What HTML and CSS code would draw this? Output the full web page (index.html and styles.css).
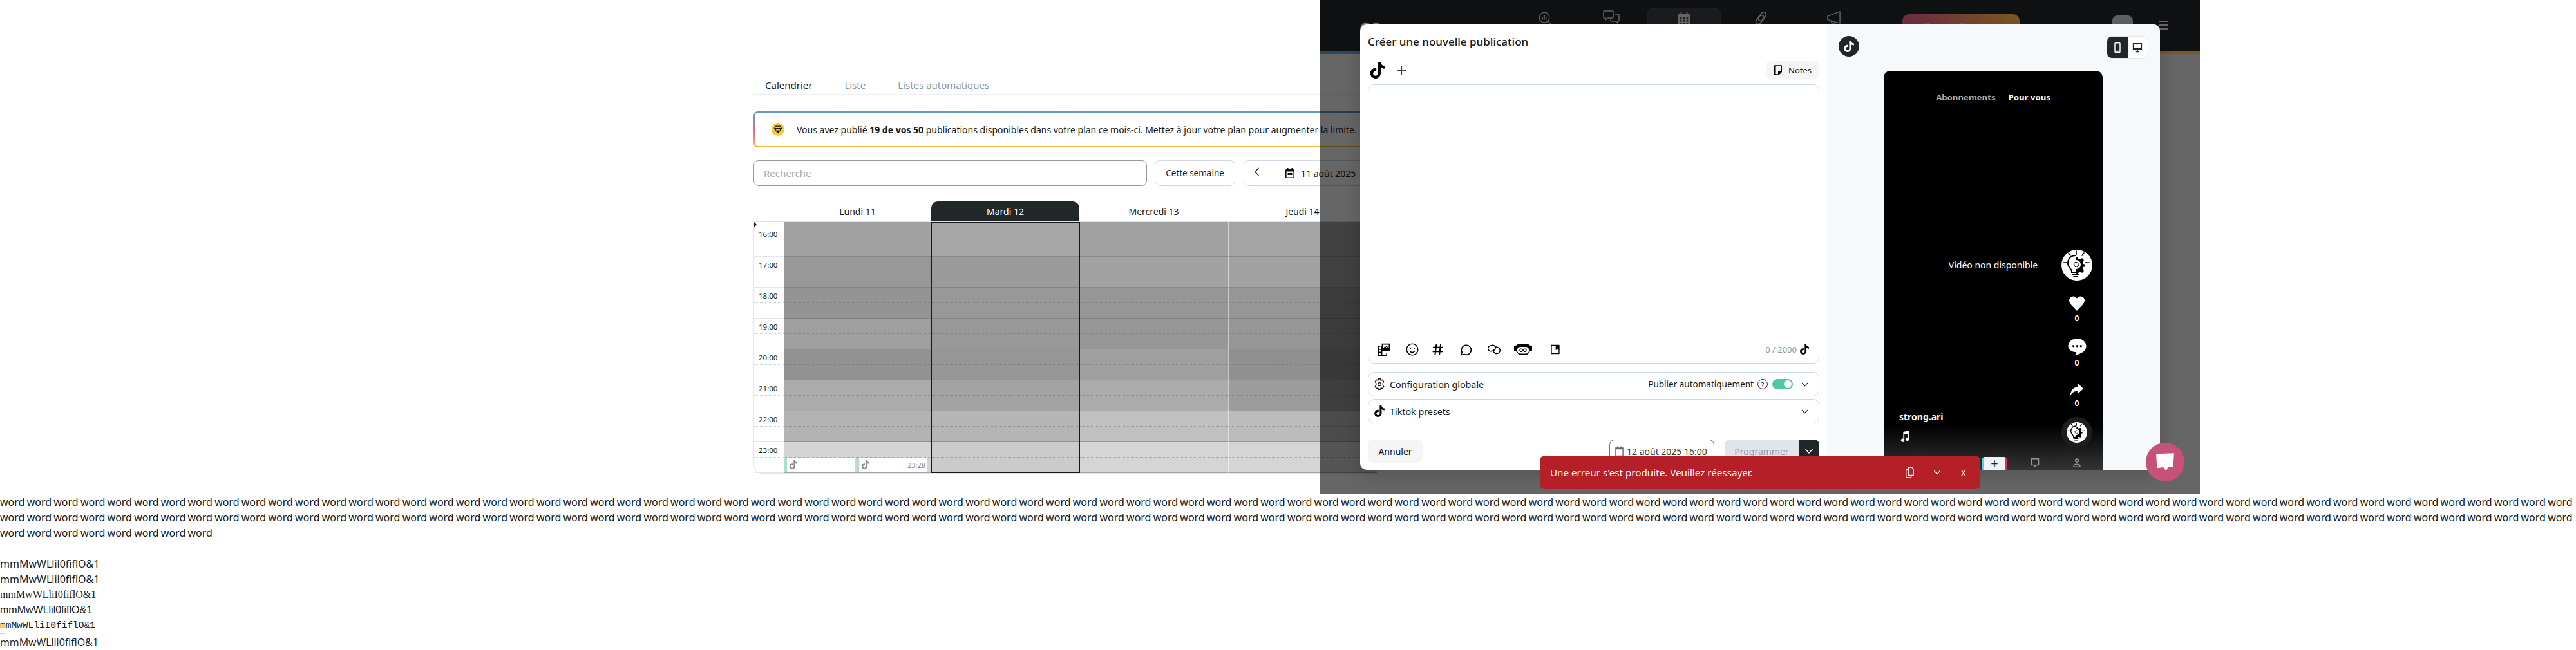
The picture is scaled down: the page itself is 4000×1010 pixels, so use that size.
FILE: index.html
```html
<!DOCTYPE html>
<html lang="fr">
<head>
  <meta charset="UTF-8" />
  <title>Calendrier</title>
  <link rel="stylesheet" href="styles.css">
</head>
<body>
  <svg class="sprite" xmlns="http://www.w3.org/2000/svg">
    <symbol id="tiktok" viewBox="0 0 24 24"><path fill="currentColor" d="M12.525.02c1.31-.02 2.61-.01 3.91-.02.08 1.53.63 3.09 1.75 4.17 1.12 1.11 2.7 1.62 4.24 1.79v4.03c-1.44-.05-2.89-.35-4.2-.97-.57-.26-1.1-.59-1.62-.93-.01 2.92.01 5.84-.02 8.75-.08 1.4-.54 2.79-1.35 3.94-1.31 1.92-3.58 3.17-5.91 3.21-1.43.08-2.86-.31-4.08-1.03-2.02-1.19-3.44-3.37-3.65-5.71-.02-.5-.03-1-.01-1.49.18-1.9 1.12-3.72 2.58-4.96 1.66-1.44 3.98-2.13 6.15-1.72.02 1.48-.04 2.96-.04 4.44-.99-.32-2.15-.23-3.02.37-.63.41-1.11 1.04-1.36 1.75-.21.51-.15 1.07-.14 1.61.24 1.64 1.82 3.02 3.5 2.87 1.12-.01 2.19-.66 2.77-1.61.19-.33.4-.67.41-1.06.1-1.79.06-3.57.07-5.36.01-4.03-.01-8.05.02-12.07z"/></symbol>
    <symbol id="chevron" viewBox="0 0 16 16"><path fill="none" stroke="currentColor" stroke-width="1.5" stroke-linecap="round" stroke-linejoin="round" d="M3 5.5 8 11l5-5.5"/></symbol>
    <symbol id="bulb" viewBox="0 0 48 48">
      <circle cx="24" cy="24" r="24" fill="#fff"/>
      <g fill="none" stroke="#000" stroke-linecap="round">
        <path stroke-width="1.6" d="M23 2v6M11 5l3 4M35 5l-3 4M3 20h6M37 20h6"/>
        <path stroke-width="2" d="M22 9c-7 0-12 5-12 12 0 5 3 7 5 10 1 1 1 3 1 4h10"/>
        <path stroke-width="1.8" d="M17 38h10M19 42h6"/>
      </g>
      <path fill="#000" d="M23 11h2l1 3 3 1 3-2 3 3-2 3 1 3 3 1v3l-3 1-1 3 2 3-3 3-3-2-3 1-1 3h-3z"/>
      <circle cx="23" cy="23" r="7" fill="#fff"/>
      <circle cx="23" cy="23" r="3.5" fill="none" stroke="#000" stroke-width="1.5" stroke-dasharray="2 .6"/>
    </symbol>
  </svg>

  <main class="page">
    <div class="planner">
      <nav class="tabs">
        <a class="tab tab-active">Calendrier</a>
        <a class="tab">Liste</a>
        <a class="tab">Listes automatiques</a>
      </nav>

      <div class="banner">
        <span class="gem">
          <svg viewBox="0 0 20 20" width="14" height="14"><path fill="none" stroke="#111" stroke-width="1.6" stroke-linejoin="round" d="M5.5 3h9L18 8l-8 10L2 8zM2 8h16M7 8l3 10 3-10"/></svg>
        </span>
        <p class="banner-text">Vous avez publié <b>19 de vos 50</b> publications disponibles dans votre plan ce mois-ci. Mettez à jour votre plan pour augmenter la limite.</p>
      </div>

      <div class="toolbar">
        <input class="search" type="text" placeholder="Recherche">
        <button class="btn-week">Cette semaine</button>
        <div class="range">
          <button class="range-prev">
            <svg viewBox="0 0 10 16" width="9" height="14"><path fill="none" stroke="#222" stroke-width="1.5" stroke-linecap="round" stroke-linejoin="round" d="M8 1.500 2 8l6 6.500"/></svg>
          </button>
          <div class="range-label">
            <svg viewBox="0 0 14 16" width="14" height="16"><path fill="#111" d="M3 0h1.600v2h4.800V0H11v2h1.500A1.500 1.500 0 0 1 14 3.500v11a1.500 1.500 0 0 1-1.500 1.500h-11A1.500 1.500 0 0 1 0 14.500v-11A1.500 1.500 0 0 1 1.500 2H3zM1.600 5.500v9h10.800v-9z"/><path fill="#111" d="M3.500 8h7v3h-7z"/></svg>
            <span>11 août 2025 - 17 août 2025</span>
          </div>
        </div>
      </div>

      <div class="days">
        <div class="day">Lundi 11</div>
        <div class="day day-today">Mardi 12</div>
        <div class="day">Mercredi 13</div>
        <div class="day">Jeudi 14</div>
      </div>

      <div class="grid">
        <div class="now"></div>
        <div class="today-frame"></div>

        <div class="time"><span>16:00</span></div>
        <div class="cell s-a2"></div><div class="cell s-a6"></div><div class="cell s-a2 sep"></div><div class="cell s-a4 sep"></div>

        <div class="time"><span>17:00</span></div>
        <div class="cell s-98"></div><div class="cell s-9b"></div><div class="cell s-a2 sep"></div><div class="cell s-a2 sep"></div>

        <div class="time"><span>18:00</span></div>
        <div class="cell s-94"></div><div class="cell s-98"></div><div class="cell s-96 sep"></div><div class="cell s-96 sep"></div>

        <div class="time"><span>19:00</span></div>
        <div class="cell s-9f"></div><div class="cell s-98"></div><div class="cell s-96 sep"></div><div class="cell s-96 sep"></div>

        <div class="time"><span>20:00</span></div>
        <div class="cell s-92"></div><div class="cell s-96"></div><div class="cell s-9f sep"></div><div class="cell s-90 sep"></div>

        <div class="time"><span>21:00</span></div>
        <div class="cell s-ab"></div><div class="cell s-a3"></div><div class="cell s-ab sep"></div><div class="cell s-9c sep"></div>

        <div class="time"><span>22:00</span></div>
        <div class="cell s-b3"></div><div class="cell s-b5"></div><div class="cell s-c0 sep"></div><div class="cell s-bc sep"></div>

        <div class="time"><span>23:00</span></div>
        <div class="cell s-d4 cell-events">
          <div class="event"><svg class="event-icon"><use href="#tiktok"/></svg></div>
          <div class="event"><svg class="event-icon"><use href="#tiktok"/></svg><span class="event-time">23:28</span></div>
        </div>
        <div class="cell s-cb"></div><div class="cell s-d5 sep"></div><div class="cell s-d5 sep"></div>
      </div>
    </div>
  </main>

  <section class="filler">
    <p class="words">
      word word word word word word word word word word
      word word word word word word word word word word
      word word word word word word word word word word
      word word word word word word word word word word
      word word word word word word word word word word
      word word word word word word word word word word
      word word word word word word word word word word
      word word word word word word word word word word
      word word word word word word word word word word
      word word word word word word word word word word
      word word word word word word word word word word
      word word word word word word word word word word
      word word word word word word word word word word
      word word word word word word word word word word
      word word word word word word word word word word
      word word word word word word word word word word
      word word word word word word word word word word
      word word word word word word word word word word
      word word word word word word word word word word
      word word word word word word word word word word
    </p>
    <p class="sample f-noto">mmMwWLlil0fiflO&amp;1</p>
    <p class="sample f-noto">mmMwWLlil0fiflO&amp;1</p>
    <p class="sample f-serif">mmMwWLliI0fiflO&amp;1</p>
    <p class="sample f-sans">mmMwWLlil0fiflO&amp;1</p>
    <p class="sample f-mono">mmMwWLliI0fiflO&amp;1</p>
    <div class="tick"></div>
    <p class="sample f-last">mmMwWLlil0fiflO&amp;1</p>
  </section>

  <div class="scrim">
    <header class="topbar">
      <svg class="bar-logo" viewBox="0 0 36 20"><path fill="none" stroke="#777" stroke-width="4" d="M4 20C0 8 8 2 12 4s6 8 6 8 2-6 6-8 12 4 8 16"/></svg>
      <svg class="bar-icon i-stats" viewBox="0 0 24 24"><g fill="none" stroke="#666" stroke-width="1.500"><circle cx="10" cy="10" r="8.500"/><path d="m16 16 6 7M7 13v-3M10 13V6M13 13V9" stroke-linecap="round"/></g></svg>
      <svg class="bar-icon i-chat" viewBox="0 0 26 22"><g fill="none" stroke="#666" stroke-width="1.500" stroke-linejoin="round"><path d="M2 1h13a1 1 0 0 1 1 1v9a1 1 0 0 1-1 1H7l-3 3v-3H2a1 1 0 0 1-1-1V2a1 1 0 0 1 1-1z"/><path d="M19 6h5a1 1 0 0 1 1 1v9a1 1 0 0 1-1 1h-1v3l-3-3h-6l-3-2"/></g></svg>
      <div class="bar-active">
        <svg class="bar-icon" viewBox="0 0 20 22"><path fill="#666" d="M4 0h2v3h8V0h2v3h2a2 2 0 0 1 2 2v15a2 2 0 0 1-2 2H2a2 2 0 0 1-2-2V5a2 2 0 0 1 2-2h2zM3 8v3h3V8zm5.500 0v3h3V8zm5.500 0v3h3V8zM3 13v3h3v-3zm5.500 0v3h3v-3zm5.500 0v3h3v-3zM3 18v2h3v-2zm5.500 0v2h3v-2zm5.500 0v2h3v-2z"/></svg>
      </div>
      <svg class="bar-icon i-link" viewBox="0 0 26 26"><g fill="none" stroke="#666" stroke-width="2"><rect x="10" y="1" width="9" height="18" rx="4.500" transform="rotate(40 14.500 10)"/><rect x="6" y="7" width="9" height="18" rx="4.500" transform="rotate(40 10.500 16)"/></g></svg>
      <svg class="bar-icon i-mega" viewBox="0 0 24 22"><path fill="none" stroke="#666" stroke-width="1.600" stroke-linejoin="round" d="M1 9 22 1v20L1 15zM7 17c0 5 7 5 7 2"/></svg>
      <div class="bar-premium">Devenir Premium</div>
      <div class="bar-avatar"></div>
      <div class="bar-menu"><i></i><i></i><i></i></div>
    </header>

    <div class="modal">
      <div class="compose">
        <h2 class="compose-title">Créer une nouvelle publication</h2>
        <div class="compose-head">
          <svg class="head-tiktok"><use href="#tiktok"/></svg>
          <svg class="head-plus" viewBox="0 0 16 16"><path fill="none" stroke="#444" stroke-width="1.400" d="M8 1v14M1 8h14"/></svg>
          <button class="btn-notes">
            <svg viewBox="0 0 16 18" width="14" height="18"><path fill="none" stroke="#000" stroke-width="1.800" stroke-linejoin="round" d="M2 1h12v11l-5 5H2z"/><path fill="#000" d="M8 11h6l-6 6z"/></svg>
            Notes
          </button>
        </div>

        <div class="editor">
          <div class="editor-tools">
            <svg class="tool" viewBox="0 0 24 24"><path fill="#000" d="M8 1h15v14H8zm2 2v7l4-4 3 3 2-2 2 2V3z"/><circle cx="17" cy="6" r="1.500" fill="#000"/><path fill="none" stroke="#000" stroke-width="1.800" d="M5 6H2v17h15v-5M2 12h6M2 17h6M8 6v17"/></svg>
            <svg class="tool tool-smile" viewBox="0 0 24 24"><g fill="none" stroke="#000" stroke-width="1.800"><circle cx="12" cy="12" r="10.500"/><path d="M7.500 15c2 3 7 3 9 0" stroke-linecap="round"/></g><circle cx="8.500" cy="9.500" r="1.300"/><circle cx="15.500" cy="9.500" r="1.300"/></svg>
            <svg class="tool tool-hash" viewBox="0 0 24 24"><path fill="none" stroke="#000" stroke-width="2.400" d="M9 2 6.500 22M17 2l-2.500 20M2.500 8h19M2 16h19"/></svg>
            <svg class="tool" viewBox="0 0 24 24"><path fill="none" stroke="#000" stroke-width="2" stroke-linejoin="round" d="M3 22l2-5A9 9 0 1 1 9 21z"/></svg>
            <svg class="tool tool-link" viewBox="0 0 26 24"><g fill="none" stroke="#000" stroke-width="2"><rect x="1" y="4" width="15" height="11" rx="5.500" transform="rotate(-15 8 10)"/><path d="M14 7c6-1 11 2 11 7s-5 7-9 6-6-5-3-9"/></g></svg>
            <svg class="tool tool-bot" viewBox="0 0 34 24"><path fill="#000" d="M8 1h18l3 3 5 1v9l-4 1c-2 6-7 8-13 8s-11-2-13-8l-4-1V5l5-1z"/><rect x="6" y="7" width="22" height="13" rx="6" fill="#fff"/><g fill="none" stroke="#000" stroke-width="1.800"><circle cx="13.500" cy="13.500" r="2.500"/><circle cx="20.500" cy="13.500" r="2.500"/></g></svg>
            <svg class="tool tool-doc" viewBox="0 0 24 24"><path fill="none" stroke="#000" stroke-width="2" stroke-linejoin="round" d="M3 2h18v20H3z"/><path fill="#000" d="M13 2h8v12l-4-3-4 3z"/></svg>
            <span class="counter">0 / 2000</span>
            <svg class="counter-icon"><use href="#tiktok"/></svg>
          </div>
        </div>

        <div class="panel">
          <svg class="panel-icon" viewBox="0 0 24 24"><g fill="none" stroke="#111" stroke-width="1.800" stroke-linejoin="round"><path d="M10 1h4l1 3 3-1 3 4-2 3v4l2 3-3 4-3-1-1 3h-4l-1-3-3 1-3-4 2-3v-4L3 7l3-4 3 1z"/><circle cx="12" cy="12" r="3.200"/></g></svg>
          <span class="panel-title">Configuration globale</span>
          <span class="panel-auto">Publier automatiquement</span>
          <span class="help">?</span>
          <span class="switch"><i></i></span>
          <svg class="panel-chevron"><use href="#chevron"/></svg>
        </div>
        <div class="panel panel-second">
          <svg class="panel-icon"><use href="#tiktok"/></svg>
          <span class="panel-title">Tiktok presets</span>
          <svg class="panel-chevron panel-chevron-end"><use href="#chevron"/></svg>
        </div>

        <div class="actions">
          <button class="btn-cancel">Annuler</button>
          <button class="btn-date">
            <svg viewBox="0 0 14 18" width="13" height="18"><path fill="none" stroke="#666" stroke-width="1.500" d="M1 3.500h12V17H1zM4 1v3M10 1v3"/><path fill="#666" d="M1 3.500h12V6H1z"/></svg>
            12 août 2025 16:00
          </button>
          <div class="schedule">
            <button class="btn-schedule">Programmer</button>
            <button class="btn-more"><svg class="more-icon"><use href="#chevron"/></svg></button>
          </div>
        </div>
      </div>

      <aside class="preview">
        <div class="preview-head">
          <span class="network"><svg class="network-icon"><use href="#tiktok"/></svg></span>
          <div class="device-switch">
            <span class="device device-on"><svg viewBox="0 0 12 20" width="10" height="16"><path fill="none" stroke="#fff" stroke-width="1.800" d="M2 1h8a1 1 0 0 1 1 1v16a1 1 0 0 1-1 1H2a1 1 0 0 1-1-1V2a1 1 0 0 1 1-1z"/><path fill="#fff" d="M4 16h4v2H4z"/></svg></span>
            <span class="device"><svg viewBox="0 0 20 20" width="16" height="16"><path fill="none" stroke="#222" stroke-width="1.800" d="M2 2h16v12H2z"/><path fill="#222" d="M6 17h8v2H6zM9 14h2v3H9zM2 11h16v3H2z"/></svg></span>
          </div>
        </div>

        <div class="phone">
          <div class="phone-tabs"><span class="phone-tab">Abonnements</span><span class="phone-tab phone-tab-on">Pour vous</span></div>
          <p class="phone-msg">Vidéo non disponible</p>

          <div class="rail">
            <svg class="rail-avatar"><use href="#bulb"/></svg>
            <svg class="rail-icon rail-heart" viewBox="0 0 24 24"><path fill="#fff" d="M12 23C7 17 0 12 0 7a6.500 6.500 0 0 1 12-3.500A6.500 6.500 0 0 1 24 7c0 5-7 10-12 16z"/></svg>
            <span class="rail-count">0</span>
            <svg class="rail-icon rail-bubble" viewBox="0 0 24 24"><path fill="#fff" d="M12 1c7 0 12 4 12 10 0 7-7 10-14 12l1-4C5 19 0 16 0 11 0 5 5 1 12 1z"/><circle cx="7" cy="11" r="1.500"/><circle cx="12" cy="11" r="1.500"/><circle cx="17" cy="11" r="1.500"/></svg>
            <span class="rail-count">0</span>
            <svg class="rail-icon rail-share" viewBox="0 0 24 24"><path fill="#fff" d="M13 1l10 10-10 9v-5C7 15 3 18 1 23c0-8 4-14 12-15z"/></svg>
            <span class="rail-count">0</span>
            <span class="disc"><svg class="disc-art"><use href="#bulb"/></svg></span>
          </div>

          <div class="caption">
            <div class="caption-user">strong.ari</div>
            <svg class="caption-note" viewBox="0 0 16 20"><path fill="#fff" d="M5 2l10-2v15a3 3 0 1 1-2-2.800V5L7 6.200V17a3 3 0 1 1-2-2.800z"/></svg>
          </div>

          <div class="phone-nav">
            <span class="phone-plus">+</span>
            <svg class="phone-nav-icon" viewBox="0 0 20 20"><path fill="none" stroke="#999" stroke-width="2" stroke-linejoin="round" d="M2 1h16v14h-5l-3 3-3-3H2z"/></svg>
            <svg class="phone-nav-icon" viewBox="0 0 20 20"><g fill="none" stroke="#999" stroke-width="2"><circle cx="10" cy="5" r="3.500"/><path d="M3 19v-2c0-3 3-4 7-4s7 1 7 4v2z"/></g></svg>
          </div>
        </div>
      </aside>
    </div>

    <div class="toast">
      <span class="toast-text">Une erreur s'est produite. Veuillez réessayer.</span>
      <svg class="toast-copy" viewBox="0 0 16 20"><path fill="none" stroke="#fff" stroke-width="1.500" stroke-linejoin="round" d="M6 1h6l3 3v11H6zM6 5H2v14h9v-4"/></svg>
      <svg class="toast-chevron"><use href="#chevron"/></svg>
      <span class="toast-close">X</span>
    </div>

    <div class="chat-fab">
      <svg viewBox="0 0 26 26" width="30" height="30"><path fill="#fff" d="M1 2l24-1-1 18-7 1-3 5-3-5-9 1z"/></svg>
    </div>
  </div>
</body>
</html>
```

FILE: styles.css
```css
:root {
  --ink: #14181b;
  --dark: #212629;
  --line: #cfd8e2;
  --soft: #f5f5f5;
  --app-font: "Noto Sans", sans-serif;
}
body {
  margin: 0;
  background: #fff;
  color: var(--ink);
  font-family: var(--app-font);
  position: relative;
  overflow: hidden;
}
p, h2 {
  margin: 0;
}
button {
  font-family: inherit;
  cursor: pointer;
}
.sprite {
  display: none;
}

/* page behind the dialog */
.page {
  height: 768px;
  padding-left: 1170px;
}
.planner {
  width: 1000px;
}
.tabs {
  display: flex;
  height: 146px;
  padding-left: 18px;
  gap: 50px;
  align-items: flex-end;
  border-bottom: 2px solid #eaf0f5;
}
.tab {
  font-size: 15px;
  line-height: 24px;
  padding-bottom: 2px;
  color: #8b959e;
}
.tab-active {
  color: var(--ink);
}
.banner {
  display: flex;
  align-items: center;
  height: 52px;
  margin-top: 25px;
  padding-left: 26px;
  border: 2px solid transparent;
  border-radius: 7px;
  background:
    linear-gradient(#fff, #fff) padding-box,
    linear-gradient(180deg, #5b9bbd 0%, #d86b95 55%, #f5c033 100%) border-box;
}
.gem {
  display: flex;
  align-items: center;
  justify-content: center;
  flex: none;
  width: 20px;
  height: 20px;
  border-radius: 50%;
  background: #f7c836;
}
.banner-text {
  margin-left: 19px;
  font-size: 14px;
  white-space: nowrap;
}
.toolbar {
  display: flex;
  margin-top: 20px;
  height: 40px;
}
.search {
  flex: none;
  box-sizing: border-box;
  width: 611px;
  height: 40px;
  padding: 0 15px;
  border: 1px solid #9a9a9a;
  border-radius: 8px;
  font-family: inherit;
  font-size: 15px;
}
.search::placeholder {
  color: #a9a9a9;
}
.btn-week {
  flex: none;
  width: 125px;
  height: 40px;
  margin-left: 12px;
  background: #fff;
  border: 1px solid var(--line);
  border-radius: 8px;
  font-size: 13.500px;
  color: var(--ink);
}
.range {
  flex: none;
  display: flex;
  margin-left: 13px;
  width: 400px;
  height: 40px;
  box-sizing: border-box;
  border: 1px solid var(--line);
  border-radius: 8px;
}
.range-prev {
  width: 39px;
  background: none;
  border: 0;
  border-right: 1px solid var(--line);
  padding: 0;
}
.range-label {
  display: flex;
  align-items: center;
  gap: 10px;
  padding-left: 25px;
  font-size: 14px;
  white-space: nowrap;
}
.days {
  display: grid;
  grid-template-columns: 229px 230px 231px 231px;
  margin-top: 24px;
  margin-left: 47px;
  height: 31px;
}
.day {
  display: flex;
  align-items: center;
  justify-content: center;
  font-size: 14px;
}
.day-today {
  background: var(--dark);
  color: #fff;
  border-radius: 10px 10px 0 0;
}
.grid {
  position: relative;
  isolation: isolate;
  display: grid;
  grid-template-columns: 46px 229px 230px 231px 231px;
  grid-template-rows: 54px repeat(7, 48px);
  width: 968px;
  border-left: 1px solid #e1e7ed;
  border-top: 1px solid #dfe5eb;
  border-bottom: 1px solid #e1e7ed;
  border-bottom-left-radius: 14px;
}
.now {
  position: absolute;
  left: 0;
  right: 0;
  top: 4px;
  height: 1px;
  background: #1b1f22;
  z-index: 3;
}
.now::before {
  content: "";
  position: absolute;
  left: 0;
  top: -4px;
  border-left: 4px solid #1b1f22;
  border-top: 4px solid transparent;
  border-bottom: 4px solid transparent;
}
.today-frame {
  position: absolute;
  left: 275px;
  top: 0;
  width: 229px;
  bottom: 0;
  border: 1px solid #15181a;
  z-index: 2;
}
.time,
.cell {
  border-bottom: 1px solid rgba(90, 108, 125, 0.45);
}
.time {
  display: flex;
  align-items: flex-end;
  border-bottom-color: #e1e7ed;
}
.time span {
  display: block;
  width: 100%;
  box-sizing: border-box;
  height: 24px;
  margin-bottom: 23px;
  padding-left: 7px;
  border-bottom: 1px dotted #c3d0da;
  font-size: 11.500px;
  line-height: 25px;
}
.cell {
  display: flex;
  align-items: flex-end;
  position: relative;
}
.cell::before {
  content: "";
  position: absolute;
  left: 0;
  right: 0;
  bottom: 23px;
  border-bottom: 1px dotted rgba(90, 108, 125, 0.45);
}
.sep {
  border-left: 1px solid rgba(255, 255, 255, 0.5);
}
.s-90 { background: #909090; }
.s-92 { background: #929292; }
.s-94 { background: #949494; }
.s-96 { background: #969696; }
.s-98 { background: #989898; }
.s-9b { background: #9b9b9b; }
.s-9c { background: #9c9c9c; }
.s-9f { background: #9f9f9f; }
.s-a2 { background: #a2a2a2; }
.s-a3 { background: #a3a3a3; }
.s-a4 { background: #a4a4a4; }
.s-a6 { background: #a6a6a6; }
.s-ab { background: #ababab; }
.s-b3 { background: #b3b3b3; }
.s-b5 { background: #b5b5b5; }
.s-bc { background: #bcbcbc; }
.s-c0 { background: #c0c0c0; }
.s-cb { background: #cbcbcb; }
.s-d4 { background: #d4d4d4; }
.s-d5 { background: #d5d5d5; }
.cell-events {
  gap: 2px;
  padding: 0 6px 1px 1px;
}
.event {
  flex: 1;
  display: flex;
  align-items: center;
  justify-content: space-between;
  height: 22px;
  padding: 0 3px;
  background: #fff;
  border-left: 4px solid #a8e0c8;
  border-radius: 2px;
  position: relative;
  z-index: 1;
}
.event-icon {
  width: 14px;
  height: 14px;
  color: #8a8a8a;
}
.event-time {
  font-size: 11px;
  color: #8a8a8a;
}

/* filler text under the page */
.filler {
  font-size: 16px;
  line-height: 24px;
}
.words {
  margin-bottom: 24px;
  font-family: "Noto Sans", sans-serif;
  word-spacing: -0.9px;
}
.sample {
  height: 24px;
}
.f-noto { font-family: "Noto Sans", sans-serif; }
.f-serif { font-family: "Liberation Serif", serif; }
.f-sans { font-family: "Liberation Sans", sans-serif; }
.f-mono { font-family: "Liberation Mono", monospace; font-size: 14.500px; }
.f-last { font-family: "Open Sans", sans-serif; }
.tick {
  width: 8px;
  height: 2px;
  border-top: 1px solid #cfcfcf;
  box-sizing: border-box;
}

/* dialog layer */
.scrim {
  position: absolute;
  left: 2050px;
  top: 0;
  width: 1366px;
  height: 768px;
  background: rgba(0, 0, 0, 0.6);
}
.topbar {
  display: flex;
  align-items: flex-end;
  box-sizing: border-box;
  height: 84px;
  background: #0f1113;
  border-bottom: 4px solid;
  border-image: linear-gradient(90deg, #2c4a5e, #35506a 40%, #7b5a20) 1;
  overflow: hidden;
}
.bar-logo {
  width: 36px;
  height: 22px;
  margin: 0 0 26px 61px;
}
.bar-icon {
  flex: none;
  margin-bottom: 40px;
  width: 20px;
  height: 22px;
}
.i-stats { margin-left: 242px; width: 22px; }
.i-chat { margin-left: 78px; width: 26px; height: 22px; margin-bottom: 42px; }
.bar-active {
  flex: none;
  display: flex;
  justify-content: center;
  align-items: flex-end;
  width: 116px;
  height: 68px;
  margin-left: 42px;
  background: #1a1c1f;
  border-radius: 10px 10px 0 0;
}
.bar-active .bar-icon {
  width: 18px;
}
.i-link { margin-left: 50px; width: 24px; margin-bottom: 41px; }
.i-mega { margin-left: 89px; width: 24px; margin-bottom: 43px; height: 20px; }
.bar-premium {
  flex: none;
  width: 182px;
  height: 58px;
  margin-left: 94px;
  padding-top: 8px;
  box-sizing: border-box;
  background: linear-gradient(90deg, #6e2a45, #7a5a20);
  border-radius: 10px 10px 0 0;
  color: #7a6a6a;
  font-size: 14px;
  text-align: center;
}
.bar-avatar {
  flex: none;
  width: 32px;
  height: 56px;
  margin-left: 144px;
  background: #5f6264;
  border-radius: 8px 8px 0 0;
}
.bar-menu {
  flex: none;
  display: flex;
  flex-direction: column;
  gap: 4px;
  margin: 0 0 34px 41px;
}
.bar-menu i {
  display: block;
  width: 14px;
  height: 2px;
  background: #666;
}

.modal {
  position: absolute;
  left: 62px;
  top: 38px;
  width: 1242px;
  height: 692px;
  display: flex;
  overflow: hidden;
  background: #fff;
  border-radius: 10px;
  box-shadow: 0 8px 30px rgba(0, 0, 0, 0.18);
}
.compose {
  box-sizing: border-box;
  width: 725px;
  padding: 0 12px;
}
.compose-title {
  padding-top: 16px;
  font-size: 17px;
  font-weight: 500;
  line-height: 22px;
}
.compose-head {
  display: flex;
  align-items: center;
  height: 28px;
  margin-top: 19px;
}
.head-tiktok {
  width: 26px;
  height: 26px;
  color: #000;
  margin-left: 2px;
}
.head-plus {
  width: 15px;
  height: 15px;
  margin-left: 17px;
}
.btn-notes {
  display: flex;
  align-items: center;
  gap: 9px;
  margin-left: auto;
  height: 28px;
  padding: 0 12px;
  background: var(--soft);
  border: 0;
  border-radius: 8px;
  font-size: 13px;
  color: var(--ink);
}
.editor {
  display: flex;
  flex-direction: column;
  justify-content: flex-end;
  box-sizing: border-box;
  height: 434px;
  margin-top: 8px;
  border: 1px solid var(--line);
  border-radius: 10px;
}
.editor-tools {
  display: flex;
  align-items: center;
  height: 22px;
  margin-bottom: 10px;
  padding: 0 14px;
}
.tool {
  width: 20px;
  height: 20px;
  margin-right: 24px;
}
.tool-smile {
  margin-right: 20px;
}
.tool-hash {
  margin-right: 23px;
}
.tool-link {
  margin-right: 21px;
}
.tool-bot {
  width: 28px;
  margin-right: 28px;
}
.tool-doc {
  width: 16px;
}
.counter {
  margin-left: auto;
  font-size: 13px;
  color: #8f98a0;
}
.counter-icon {
  width: 16px;
  height: 20px;
  margin-left: 4px;
  color: #000;
}
.panel {
  display: flex;
  align-items: center;
  box-sizing: border-box;
  height: 38px;
  margin-top: 13px;
  padding: 0 15px 0 8px;
  border: 1px solid var(--line);
  border-radius: 10px;
}
.panel-second {
  margin-top: 4px;
}
.panel-icon {
  width: 18px;
  height: 18px;
  color: #000;
}
.panel-title {
  margin-left: 7px;
  font-size: 14.300px;
}
.panel-auto {
  margin-left: auto;
  font-size: 13.500px;
}
.help {
  display: flex;
  align-items: center;
  justify-content: center;
  box-sizing: border-box;
  width: 16px;
  height: 16px;
  margin-left: 6px;
  border: 1px solid #333;
  border-radius: 50%;
  font-size: 11px;
}
.switch {
  display: flex;
  align-items: center;
  justify-content: flex-end;
  box-sizing: border-box;
  width: 32px;
  height: 16px;
  margin-left: 7px;
  padding-right: 2px;
  background: #53c8a0;
  border-radius: 8px;
}
.switch i {
  display: block;
  width: 12px;
  height: 12px;
  background: #fff;
  border-radius: 50%;
}
.panel-chevron {
  width: 13px;
  height: 13px;
  margin-left: 12px;
  color: #222;
}
.panel-chevron-end {
  margin-left: auto;
}
.actions {
  display: flex;
  margin-top: 25px;
}
.btn-cancel {
  width: 85px;
  height: 36px;
  background: var(--soft);
  border: 0;
  border-radius: 8px;
  font-size: 14px;
  color: var(--ink);
}
.btn-date {
  display: flex;
  align-items: center;
  gap: 5px;
  width: 163px;
  height: 36px;
  margin-left: auto;
  padding: 0 8px;
  background: #fff;
  border: 1px solid #777;
  border-radius: 8px;
  font-size: 14px;
  color: #333;
  white-space: nowrap;
}
.schedule {
  display: flex;
  margin-left: 16px;
}
.btn-schedule {
  width: 115px;
  height: 36px;
  background: #dfe5eb;
  border: 0;
  border-radius: 8px 0 0 8px;
  font-size: 14px;
  color: #8a97a5;
}
.btn-more {
  width: 32px;
  height: 36px;
  padding: 0;
  background: var(--dark);
  border: 0;
  border-radius: 0 8px 8px 0;
}
.more-icon {
  width: 16px;
  height: 16px;
  margin-top: 3px;
  color: #fff;
}

.preview {
  flex: 1;
  background: #f5f9fc;
  padding: 18px 18px 0;
}
.preview-head {
  display: flex;
  justify-content: space-between;
  align-items: flex-start;
}
.network {
  display: flex;
  align-items: center;
  justify-content: center;
  width: 32px;
  height: 32px;
  background: var(--dark);
  border-radius: 50%;
}
.network-icon {
  width: 18px;
  height: 18px;
  color: #fff;
}
.device-switch {
  display: flex;
  box-sizing: border-box;
  width: 65px;
  height: 35px;
  background: #fff;
  border: 1px solid #e3e8ee;
  border-radius: 8px;
  overflow: hidden;
}
.device {
  flex: 1;
  display: flex;
  align-items: center;
  justify-content: center;
}
.device-on {
  background: var(--dark);
}
.phone {
  position: relative;
  width: 340px;
  height: 620px;
  margin: 19px 0 0 70px;
  background: #000;
  border-radius: 10px 10px 0 0;
  overflow: hidden;
  color: #fff;
}
.phone-tabs {
  display: flex;
  justify-content: center;
  gap: 20px;
  padding-top: 31px;
  font-size: 13.200px;
  line-height: 20px;
  font-weight: 700;
}
.phone-tab {
  color: #aaa;
}
.phone-tab-on {
  color: #fff;
}
.phone-msg {
  margin-top: 241px;
  text-align: center;
  font-size: 14px;
  line-height: 20px;
}
.rail {
  position: absolute;
  top: 278px;
  right: 16px;
  width: 48px;
  display: flex;
  flex-direction: column;
  align-items: center;
}
.rail-avatar {
  width: 48px;
  height: 48px;
  flex: none;
}
.rail-icon {
  flex: none;
}
.rail-heart {
  width: 26px;
  height: 24px;
  margin-top: 24px;
}
.rail-bubble {
  width: 31px;
  height: 28px;
  margin-top: 22px;
}
.rail-share {
  width: 24px;
  height: 22px;
  margin-top: 22px;
}
.rail-count {
  font-size: 12px;
  font-weight: 700;
  line-height: 16px;
  margin-top: 3px;
}
.disc {
  display: flex;
  align-items: center;
  justify-content: center;
  width: 48px;
  height: 48px;
  margin-top: 13px;
  background: #1d1d1d;
  border-radius: 50%;
  position: relative;
  z-index: 1;
}
.disc-art {
  width: 32px;
  height: 32px;
}
.caption {
  position: absolute;
  left: 24px;
  top: 528px;
  z-index: 1;
}
.caption-user {
  font-size: 14px;
  line-height: 20px;
  font-weight: 700;
}
.caption-note {
  display: block;
  width: 14px;
  height: 20px;
  margin: 10px 0 0 2px;
}
.phone-nav {
  position: absolute;
  left: 0;
  right: 0;
  bottom: 0;
  display: flex;
  align-items: flex-end;
  justify-content: flex-end;
  height: 70px;
  padding-right: 33px;
  background: linear-gradient(180deg, rgba(40, 40, 40, 0), #333);
}
.phone-plus {
  display: flex;
  justify-content: center;
  align-items: center;
  box-sizing: border-box;
  width: 40px;
  height: 20px;
  margin-right: 36px;
  background: #f2f2f2;
  border-left: 3px solid #35e0e6;
  border-right: 3px solid #ee2a4d;
  border-radius: 5px 5px 0 0;
  color: #222;
  font-size: 20px;
  line-height: 20px;
}
.phone-nav-icon {
  width: 14px;
  height: 18px;
  margin-bottom: 2px;
}
.phone-nav-icon + .phone-nav-icon {
  margin-left: 51px;
}

.toast {
  position: absolute;
  left: 341px;
  top: 708px;
  display: flex;
  align-items: center;
  box-sizing: border-box;
  width: 684px;
  height: 52px;
  padding-left: 16px;
  background: #b51f27;
  border-radius: 8px;
  color: #fff;
}
.toast-text {
  font-size: 15.200px;
  flex: 1;
}
.toast-copy {
  width: 14px;
  height: 20px;
}
.toast-chevron {
  width: 14px;
  height: 14px;
  margin-left: 29px;
  color: #fff;
}
.toast-close {
  margin: 0 22px 0 30px;
  font-size: 14px;
}
.chat-fab {
  position: absolute;
  left: 1282px;
  top: 688px;
  display: flex;
  align-items: center;
  justify-content: center;
  width: 60px;
  height: 60px;
  background: #c65279;
  border-radius: 50%;
}
```
